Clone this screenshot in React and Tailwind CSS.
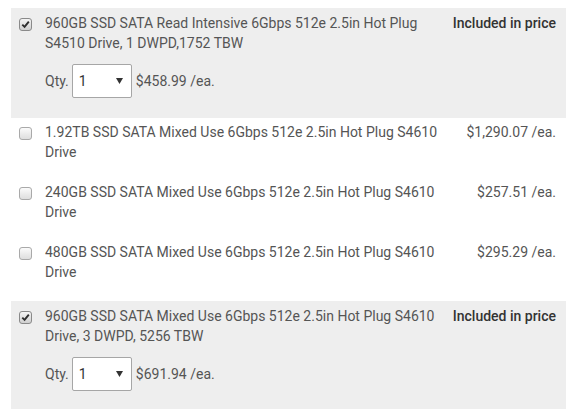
import React from "react";

const items = [
    { name: "960GB SSD SATA Read Intensive 6Gbps 512e 2.5in Hot Plug S4510 Drive, 1 DWPD,1752 TBW", checked: true, each: "$458.99", gap: "mt-2" },
    { name: "1.92TB SSD SATA Mixed Use 6Gbps 512e 2.5in Hot Plug S4610 Drive", price: "$1,290.07 /ea." },
    { name: "240GB SSD SATA Mixed Use 6Gbps 512e 2.5in Hot Plug S4610 Drive", price: "$257.51 /ea." },
    { name: "480GB SSD SATA Mixed Use 6Gbps 512e 2.5in Hot Plug S4610 Drive", price: "$295.29 /ea." },
    { name: "960GB SSD SATA Mixed Use 6Gbps 512e 2.5in Hot Plug S4610 Drive, 3 DWPD, 5256 TBW", checked: true, each: "$691.94", gap: "mt-[3px]" },
];

function Box({ checked }) {
    return (
        <span
            className={`mt-[5px] flex h-[13px] w-[13px] shrink-0 items-center justify-center rounded-[3px] border ${
                checked ? "border-[#8a8a8a] bg-gradient-to-b from-[#f4f4f4] to-[#cfcfcf]" : "border-[#a9a9a9] bg-gradient-to-b from-[#fbfbfb] to-[#dedede]"
            }`}
        >
            {checked && (
                <svg width="9" height="9" viewBox="0 0 9 9">
                    <path d="M1.3 4.6 L3.6 6.9 L7.8 1.6" fill="none" stroke="#2d2d2d" strokeWidth="1.9" />
                </svg>
            )}
        </span>
    );
}

function Qty({ each }) {
    return (
        <div className="mt-[11px] flex items-center text-[#555]">
            <span>Qty.</span>
            <div className="ml-[3px] flex h-[34px] w-[60px] items-center justify-between rounded-[2px] border border-[#a6a6a6] bg-white pl-[6px] pr-[8px]">
                <span className="text-[#333]">1</span>
                <svg width="7" height="6" viewBox="0 0 7 6">
                    <path d="M0 0 H7 L3.5 6 Z" fill="#333" />
                </svg>
            </div>
            <span className="ml-[4px]">{each} /ea.</span>
        </div>
    );
}

export default function App() {
    return (
        <div className="h-[409px] w-[579px] overflow-hidden bg-white pl-[11px] text-[14px] leading-[20px]" style={{ fontFamily: "Roboto, 'Liberation Sans', sans-serif" }}>
            {items.map((it, i) => (
                <div key={i} className={`flex w-[555px] pl-[8px] pr-[10px] ${it.checked ? `${it.gap} bg-[#eeeeee] pt-[5px] pb-5` : "pt-1 pb-4"}`}>
                    <Box checked={it.checked} />
                    <div className="ml-[13px] w-[402px]">
                        <p className="text-[#555]">{it.name}</p>
                        {it.checked && <Qty each={it.each} />}
                    </div>
                    <div className="flex-1 text-right">
                        {it.checked ? <span className="font-medium text-[#333]">Included in price</span> : <span className="text-[#555]">{it.price}</span>}
                    </div>
                </div>
            ))}
        </div>
    );
}
